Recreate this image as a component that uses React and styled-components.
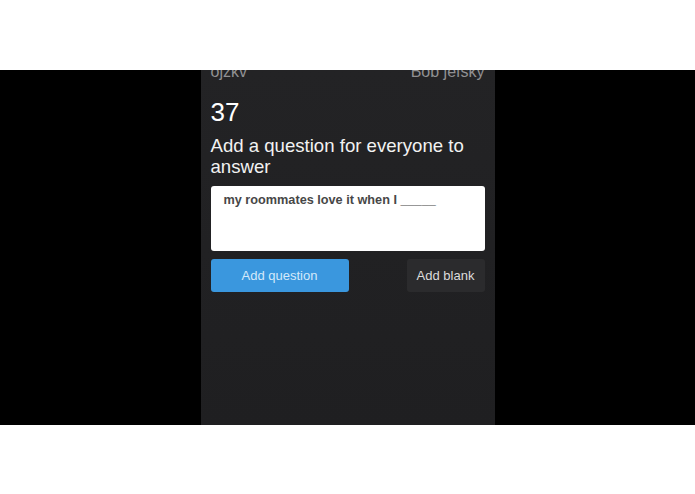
import React from "react";
import styled, { createGlobalStyle } from "styled-components";

const Global = createGlobalStyle`
  html, body { margin: 0; padding: 0; background: #ffffff; }
  body { font-family: "Liberation Sans", Arial, sans-serif; }
`;

const Page = styled.div`
  height: 494px;
  display: flex;
  flex-direction: column;
  background: #ffffff;
`;

const WhiteStrip = styled.div`
  height: ${(p) => p.h}px;
  background: #ffffff;
  flex: none;
`;

const Band = styled.div`
  height: 355px;
  background: #000000;
  display: flex;
  justify-content: center;
  flex: none;
`;

const Phone = styled.div`
  width: 294px;
  box-sizing: border-box;
  padding: 0 10px;
  background: linear-gradient(#232325, #1f1f21);
  overflow: hidden;
  display: flex;
  flex-direction: column;
`;

const Header = styled.div`
  display: flex;
  justify-content: space-between;
  margin-top: -6px;
  font-size: 16px;
  line-height: 16px;
  color: #909092;
`;

const Score = styled.div`
  margin-top: 17px;
  font-size: 26px;
  line-height: 30px;
  color: #ffffff;
`;

const Title = styled.div`
  margin-top: 8px;
  font-size: 18.6px;
  line-height: 21px;
  color: #f2f2f2;
`;

const InputBox = styled.div`
  margin-top: 9px;
  height: 65px;
  box-sizing: border-box;
  background: #ffffff;
  border-radius: 3px;
  padding: 6px 13px;
  font-size: 12.7px;
  line-height: 16px;
  font-weight: 700;
  color: #474747;
`;

const Actions = styled.div`
  margin-top: 8px;
  display: flex;
  justify-content: space-between;
`;

const Button = styled.div`
  height: 33px;
  width: ${(p) => p.w}px;
  box-sizing: border-box;
  border-radius: 3px;
  display: flex;
  align-items: center;
  justify-content: center;
  font-size: 13px;
  background: ${(p) => (p.primary ? "#3a97de" : "#2b2b2d")};
  color: ${(p) => (p.primary ? "#d4e9fa" : "#dcdcdc")};
`;

export default function App() {
  return (
    <>
      <Global />
      <Page>
        <WhiteStrip h={70} />
        <Band>
          <Phone>
            <Header>
              <span>ojzkv</span>
              <span>Bob jefsky</span>
            </Header>
            <Score>37</Score>
            <Title>Add a question for everyone to answer</Title>
            <InputBox>my roommates love it when I _____</InputBox>
            <Actions>
              <Button primary w={138}>Add question</Button>
              <Button w={78}>Add blank</Button>
            </Actions>
          </Phone>
        </Band>
        <WhiteStrip h={69} />
      </Page>
    </>
  );
}
